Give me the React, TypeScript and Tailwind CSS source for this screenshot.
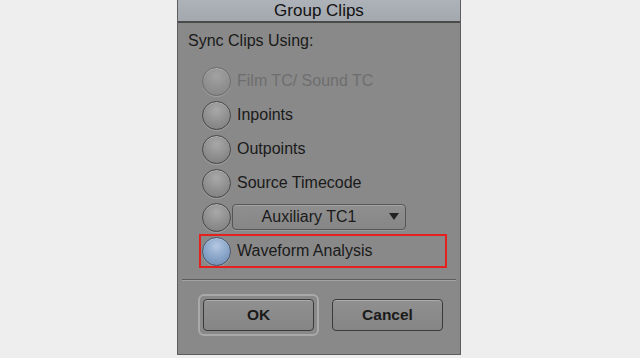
const font = { fontFamily: '"Liberation Sans", Arial, sans-serif' }

function Radio({ state }: { state: 'normal' | 'dim' | 'on' }) {
  const fill =
    state === 'on'
      ? 'bg-[radial-gradient(circle_at_50%_30%,#b4c8e2_0%,#86a2c6_55%,#6c88ae_100%)] border-[#4a5668]'
      : state === 'dim'
        ? 'bg-[radial-gradient(circle_at_50%_30%,#a2a2a2_0%,#8e8e8e_60%,#858585_100%)] border-[#6c6c6c]'
        : 'bg-[radial-gradient(circle_at_50%_30%,#a8a8a8_0%,#8c8c8c_60%,#7c7c7c_100%)] border-[#474747]'
  return (
    <span
      className={`block size-[29px] shrink-0 rounded-full border-[1.5px] shadow-[inset_0_1px_0_rgba(255,255,255,0.25),0_1px_0_rgba(255,255,255,0.2)] ${fill}`}
    />
  )
}

function Row({ label, dim, on }: { label: string; dim?: boolean; on?: boolean }) {
  return (
    <div
      className={`flex h-[34px] w-[248px] items-center gap-[6px] pl-[3px] ${
        on ? 'outline-2 outline-offset-[-2px] outline-[#e5211f] outline' : ''
      }`}
    >
      <Radio state={dim ? 'dim' : on ? 'on' : 'normal'} />
      <span className={`text-[16px] leading-none ${dim ? 'text-[#6e6e6e]' : 'text-[#1a1a1a]'}`}>{label}</span>
    </div>
  )
}

function Button({ label, focused }: { label: string; focused?: boolean }) {
  const btn = (
    <div className="flex h-[32px] w-[111px] items-center justify-center rounded-[4px] border-[1.5px] border-[#3a3a3a] bg-[linear-gradient(#909090,#858585)] text-[15.5px] font-bold text-[#1a1a1a] shadow-[inset_0_1px_0_rgba(255,255,255,0.25)]">
      {label}
    </div>
  )
  if (!focused) return btn
  return (
    <div className="-m-[5px] rounded-[6px] border-2 border-[#a9a9a9] p-[3px]">{btn}</div>
  )
}

export default function App() {
  return (
    <div className="h-[358px] w-[640px] overflow-hidden bg-[#eeeeee]" style={font}>
      <div className="ml-[177px] flex h-[355px] w-[284px] flex-col border-x border-b border-[#5e5e5e] bg-[#898989]">
        <div className="flex h-[23px] shrink-0 items-center justify-center border-b-2 border-[#4a4a4a] bg-[linear-gradient(#aeb2b9,#a3a7ae)] text-[17px] leading-none text-[#111]">
          Group Clips
        </div>
        <div className="pl-[10px] pt-[10px] text-[16px] leading-[16px] text-[#1a1a1a]">Sync Clips Using:</div>
        <div className="ml-[21px] mt-[15px] flex flex-col">
          <Row label="Film TC/ Sound TC" dim />
          <Row label="Inpoints" />
          <Row label="Outpoints" />
          <Row label="Source Timecode" />
          <div className="flex h-[34px] items-center gap-[1px] pl-[3px]">
            <Radio state="normal" />
            <div className="relative flex h-[26px] w-[174px] items-center justify-center rounded-[4px] border-[1.5px] border-[#565656] bg-[linear-gradient(#8f8f8f,#868686)] shadow-[inset_0_1px_0_rgba(255,255,255,0.2),0_1px_0_rgba(255,255,255,0.15)]">
              <span className="pr-[20px] text-[16px] leading-none text-[#1a1a1a]">Auxiliary TC1</span>
              <span className="absolute right-[6px] top-[8px] h-0 w-0 border-x-[5px] border-t-[7px] border-x-transparent border-t-[#222]" />
            </div>
          </div>
          <Row label="Waveform Analysis" on />
        </div>
        <div className="mx-[4px] mt-[11px] h-[2px] border-t border-b border-t-[#5c5c5c] border-b-[#a2a2a2]" />
        <div className="mt-[18px] flex gap-[18px] pl-[25px]">
          <Button label="OK" focused />
          <Button label="Cancel" />
        </div>
      </div>
    </div>
  )
}
